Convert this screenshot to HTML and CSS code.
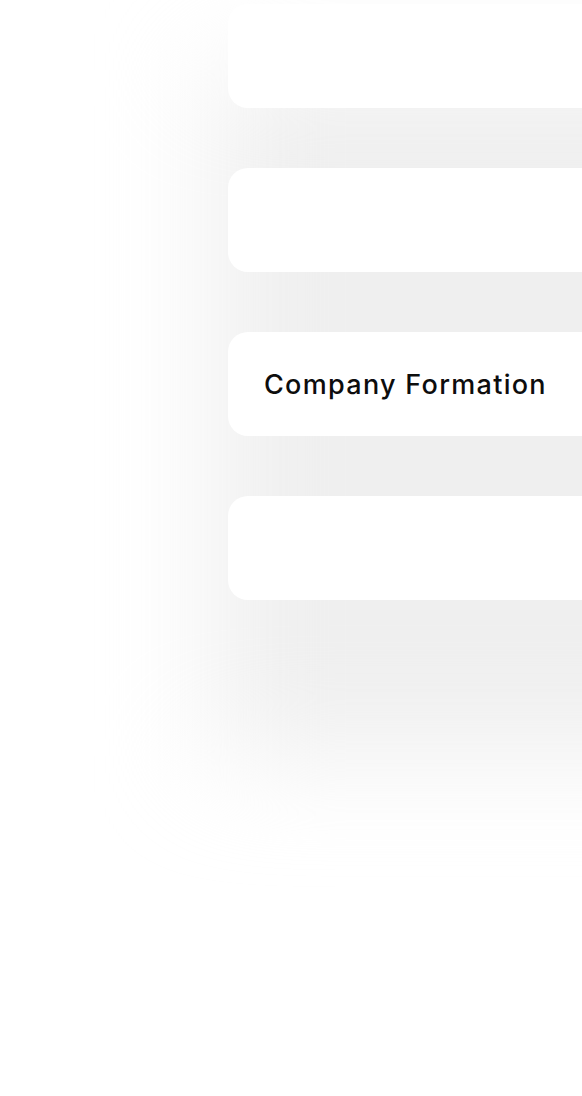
FILE: index.html
```html
<!DOCTYPE html>
<html lang="en">
<head>
<meta charset="utf-8">
<title>Services</title>
<link rel="stylesheet" href="styles.css">
</head>
<body>
<main class="stage">
  <ul class="list">
    <li class="card"></li>
    <li class="card"></li>
    <li class="card"><span class="label">Company Formation</span></li>
    <li class="card"></li>
  </ul>
</main>
</body>
</html>
```

FILE: styles.css
```css
html, body {
  margin: 0;
  padding: 0;
  background: #ffffff;
}

.stage {
  position: relative;
  width: 582px;
  height: 1096px;
  overflow: hidden;
  font-family: Inter, "Liberation Sans", sans-serif;
}

.stage::before {
  content: "";
  position: absolute;
  left: 215px;
  right: -160px;
  top: 70px;
  bottom: 340px;
  background: #efefef;
  filter: blur(55px);
  z-index: 0;
}

.list {
  position: relative;
  z-index: 1;
  list-style: none;
  margin: 0;
  padding: 4px 0 0 228px;
  display: flex;
  flex-direction: column;
  gap: 60px;
}

.card {
  height: 104px;
  margin-right: -60px;
  background: #ffffff;
  border-radius: 20px;
  display: flex;
  align-items: center;
  padding-left: 36px;
}

.label {
  font-size: 27px;
  font-weight: 450;
  color: #0d0d0d;
  letter-spacing: 1.3px;
}
```
